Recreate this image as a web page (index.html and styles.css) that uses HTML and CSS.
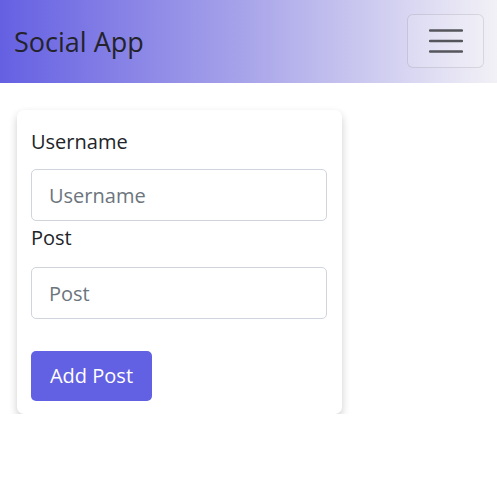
FILE: index.html
```html
<!DOCTYPE html>
<html lang="en">
<head>
<meta charset="utf-8">
<title>Social App</title>
<link rel="stylesheet" href="styles.css">
</head>
<body>
<nav class="navbar">
  <a class="brand" href="#">Social App</a>
  <button class="toggler" type="button" aria-label="Toggle navigation">
    <svg width="34" height="24" viewBox="0 0 34 24" aria-hidden="true">
      <path d="M1 1.5H33M1 12H33M1 22.5H33" stroke="#55555c" stroke-width="2.4" stroke-linecap="round"/>
    </svg>
  </button>
</nav>
<main class="page">
  <form class="card">
    <div class="field">
      <label class="label" for="username">Username</label>
      <input class="input" id="username" type="text" placeholder="Username">
    </div>
    <div class="field field-post">
      <label class="label" for="post">Post</label>
      <input class="input" id="post" type="text" placeholder="Post">
    </div>
    <button class="btn" type="button">Add Post</button>
  </form>
</main>
</body>
</html>
```

FILE: styles.css
```css
* { box-sizing: border-box; }
html, body { margin: 0; padding: 0; }
body {
  font-family: "Open Sans", "Noto Sans", sans-serif;
  color: #212529;
  background: #fff;
}
.navbar {
  height: 83px;
  display: flex;
  align-items: center;
  justify-content: space-between;
  padding: 0 13px 0 14px;
  background: linear-gradient(to right, #6560e2 0%, #a9a5ea 50%, #f2f1f6 100%);
}
.brand {
  font-size: 27px;
  line-height: 34px;
  color: #24232c;
  text-decoration: none;
  margin-top: 1px;
}
.toggler {
  width: 77px;
  height: 54px;
  display: flex;
  align-items: center;
  justify-content: center;
  border: 1px solid rgba(0, 0, 0, 0.1);
  border-radius: 6px;
  background: rgba(255, 255, 255, 0.12);
  padding: 0;
  margin-top: -1px;
}
.page {
  padding: 27px 0 0 17px;
}
.card {
  width: 325px;
  background: #fff;
  border-radius: 7px;
  box-shadow: 0 4px 9px rgba(0, 0, 0, 0.2);
  padding: 17px 15px 13px 14px;
  display: flex;
  flex-direction: column;
  align-items: flex-start;
}
.field {
  width: 100%;
  display: flex;
  flex-direction: column;
}
.field-post { margin-top: 2px; }
.label {
  font-size: 20px;
  line-height: 30px;
  margin-bottom: 12px;
}
.field-post .label { margin-bottom: 14px; }
.input {
  width: 100%;
  height: 52px;
  border: 1px solid #d0d4dc;
  border-radius: 5px;
  padding: 0 17px;
  font-family: inherit;
  font-size: 20px;
  color: #212529;
  background: #fff;
  outline: none;
}
.input::placeholder { color: #6c757d; }
.btn {
  margin-top: 32px;
  height: 50px;
  width: 121px;
  padding: 0;
  border: none;
  border-radius: 5px;
  background: #6361e3;
  color: #fff;
  font-family: inherit;
  font-size: 20px;
  line-height: 30px;
}
```
